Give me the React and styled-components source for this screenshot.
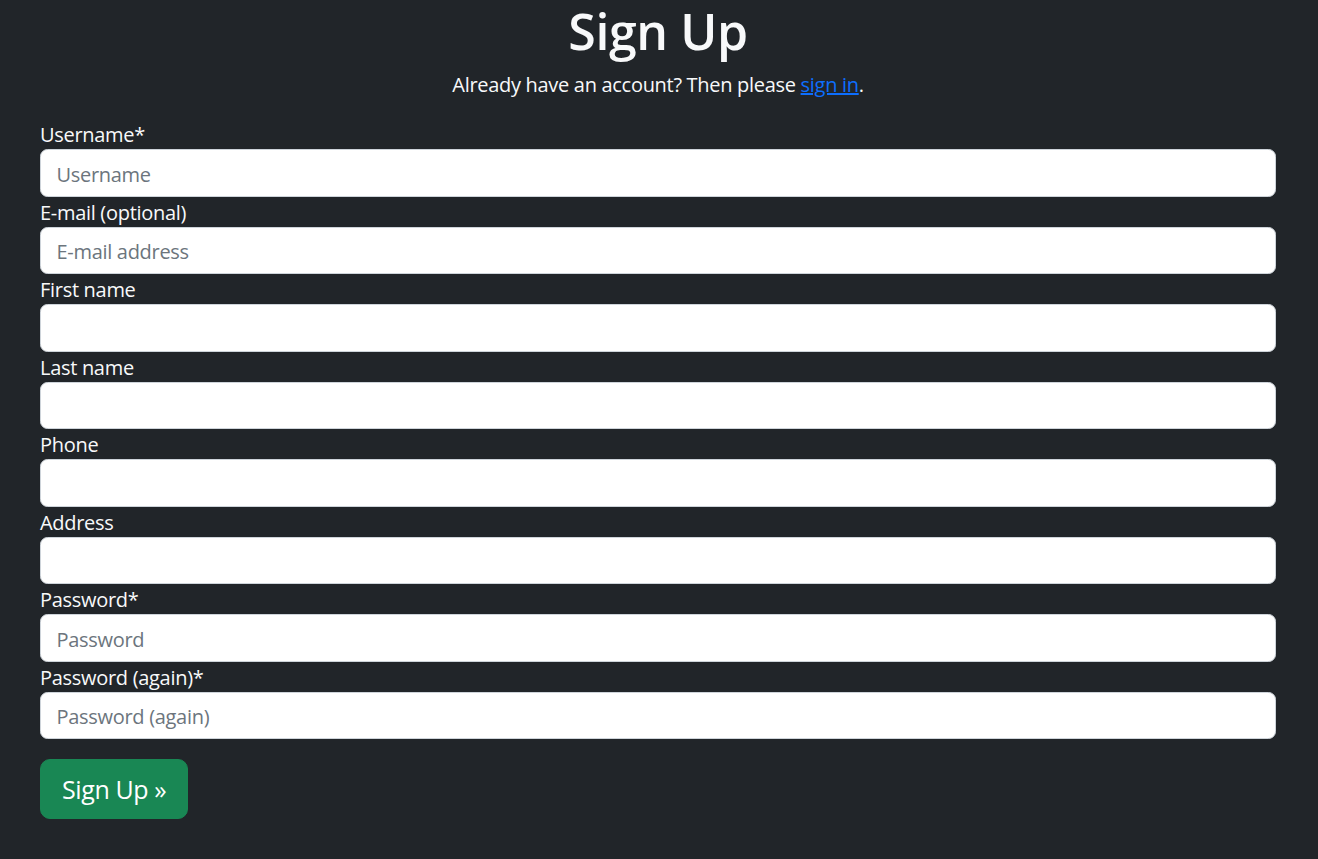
import React from 'react';
import styled, { createGlobalStyle } from 'styled-components';

const GlobalStyle = createGlobalStyle`
  html, body {
    margin: 0;
    padding: 0;
    background: #212529;
  }
  body {
    font-family: "Open Sans", "Noto Sans", sans-serif;
    font-size: 20px;
    line-height: 1.5;
    color: #f8f9fa;
  }
  * {
    box-sizing: border-box;
  }
`;

const fields = [
  { label: 'Username*', placeholder: 'Username', type: 'text' },
  { label: 'E-mail (optional)', placeholder: 'E-mail address', type: 'email' },
  { label: 'First name', placeholder: '', type: 'text' },
  { label: 'Last name', placeholder: '', type: 'text' },
  { label: 'Phone', placeholder: '', type: 'text' },
  { label: 'Address', placeholder: '', type: 'text' },
  { label: 'Password*', placeholder: 'Password', type: 'password' },
  { label: 'Password (again)*', placeholder: 'Password (again)', type: 'password' },
];

const App = () => {
  return (
    <>
      <GlobalStyle />
      <Page>
        <Title>Sign Up</Title>
        <Lead>
          Already have an account? Then please <a href="#signin">sign in</a>.
        </Lead>
        <Form onSubmit={(e) => e.preventDefault()}>
          {fields.map((field, index) => (
            <Field key={index}>
              <Label htmlFor={`field-${index}`}>{field.label}</Label>
              <Input id={`field-${index}`} type={field.type} placeholder={field.placeholder} />
            </Field>
          ))}
          <SubmitButton type="submit">Sign Up &raquo;</SubmitButton>
        </Form>
      </Page>
    </>
  );
};

export default App;

const Page = styled.div`
  padding: 0 42px 40px 40px;
  letter-spacing: -0.3px;
`;

const Title = styled.h1`
  margin: 0 0 13px;
  padding-top: 5px;
  font-size: 50px;
  font-weight: 600;
  line-height: 52px;
  letter-spacing: -0.4px;
  text-align: center;
`;

const Lead = styled.p`
  margin: 0 0 19px;
  text-align: center;

  a {
    color: #0d6efd;
    text-decoration: underline;
  }
`;

const Form = styled.form`
  display: flex;
  flex-direction: column;
  align-items: flex-start;
`;

const Field = styled.div`
  display: flex;
  flex-direction: column;
  width: 100%;
`;

const Label = styled.label`
  display: block;
  height: 30px;
  padding-top: 1px;
  line-height: 29px;
`;

const Input = styled.input`
  display: block;
  width: 100%;
  height: 47.5px;
  padding: 9px 15.5px 6px;
  font-family: inherit;
  font-size: 20px;
  line-height: 1.5;
  letter-spacing: -0.3px;
  color: #212529;
  background: #ffffff;
  border: 1.25px solid #ced4da;
  border-radius: 7.5px;
  outline: none;

  &::placeholder {
    color: #6c757d;
    opacity: 1;
  }
`;

const SubmitButton = styled.button`
  margin-top: 20px;
  height: 60px;
  padding: 11px 21px 9px;
  font-family: inherit;
  font-size: 25px;
  line-height: 1.5;
  letter-spacing: -0.4px;
  color: #ffffff;
  background: #198754;
  border: 1.25px solid #198754;
  border-radius: 10px;
  cursor: pointer;
`;
